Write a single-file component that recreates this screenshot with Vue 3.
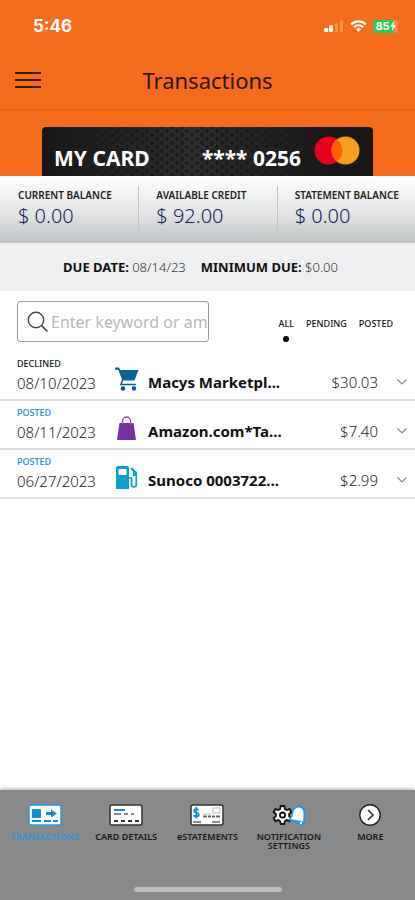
<script setup>
import { ref, computed } from 'vue'

const balances = [
  { label: 'CURRENT BALANCE', value: '$ 0.00' },
  { label: 'AVAILABLE CREDIT', value: '$ 92.00' },
  { label: 'STATEMENT BALANCE', value: '$ 0.00' },
]

const filters = ['ALL', 'PENDING', 'POSTED']
const activeFilter = ref('ALL')
const query = ref('')

const transactions = [
  { status: 'DECLINED', date: '08/10/2023', icon: 'cart', name: 'Macys Marketpl...', amount: '$30.03' },
  { status: 'POSTED', date: '08/11/2023', icon: 'bag', name: 'Amazon.com*Ta...', amount: '$7.40' },
  { status: 'POSTED', date: '06/27/2023', icon: 'fuel', name: 'Sunoco 0003722...', amount: '$2.99' },
]

const visible = computed(() =>
  transactions.filter((t) => {
    const matchesFilter = activeFilter.value === 'ALL' || t.status === activeFilter.value
    const q = query.value.toLowerCase()
    return matchesFilter && (t.name.toLowerCase().includes(q) || t.amount.includes(q))
  }),
)
</script>

<template>
  <div class="screen">
    <header class="top">
      <div class="status-bar">
        <span class="time">5:46</span>
        <div class="indicators">
          <svg class="signal" viewBox="0 0 20 12" aria-hidden="true">
            <rect x="0" y="8" width="4" height="4" rx="1" fill="#fff" />
            <rect x="5" y="5" width="4" height="7" rx="1" fill="#fff" />
            <rect x="11" y="3" width="3" height="9" rx="1" fill="#f98d4c" />
            <rect x="16" y="0" width="3" height="12" rx="1" fill="#f98d4c" />
          </svg>
          <svg class="wifi" viewBox="0 0 17 12" aria-hidden="true">
            <path d="M1.2 4.4a10.4 10.4 0 0 1 14.6 0" fill="none" stroke="#fff" stroke-width="2.2" />
            <path d="M3.9 7.2a6.6 6.6 0 0 1 9.2 0" fill="none" stroke="#fff" stroke-width="2" />
            <path d="M8.5 12 5.9 9.3a3.8 3.8 0 0 1 5.2 0z" fill="#fff" />
          </svg>
          <span class="battery">
            <span>85</span>
            <svg viewBox="0 0 6 10" aria-hidden="true"><path d="M4.2 0 0 5.7h2.4L1.8 10 6 4.2H3.5z" fill="#fff" /></svg>
          </span>
        </div>
      </div>
      <div class="title-bar">
        <button class="menu" type="button" aria-label="Menu"><i></i><i></i><i></i></button>
        <h1>Transactions</h1>
      </div>
      <div class="card-area">
        <div class="card">
          <span class="card-name">MY CARD</span>
          <span class="card-number">**** 0256</span>
          <svg class="brand" viewBox="0 0 46 29" aria-hidden="true">
            <circle cx="14.5" cy="14.5" r="14" fill="#eb001b" />
            <circle cx="31.5" cy="14.5" r="14" fill="#f79e1b" />
            <path d="M23 3.4a14 14 0 0 1 0 22.2a14 14 0 0 1 0-22.2z" fill="#ff5f00" />
          </svg>
        </div>
      </div>
    </header>

    <main>
      <section class="balances">
        <div v-for="b in balances" :key="b.label" class="balance">
          <span class="balance-label">{{ b.label }}</span>
          <span class="balance-value">{{ b.value }}</span>
        </div>
      </section>

      <section class="due">
        <span><b>DUE DATE:</b> 08/14/23</span>
        <span><b>MINIMUM DUE:</b> $0.00</span>
      </section>

      <section class="tools">
        <label class="search">
          <svg viewBox="0 0 22 22" aria-hidden="true">
            <circle cx="9" cy="9" r="7.7" fill="none" stroke="#444" stroke-width="1.4" />
            <path d="M14.5 14.5 20.5 20.5" stroke="#444" stroke-width="1.6" />
          </svg>
          <input v-model="query" type="text" placeholder="Enter keyword or amount" aria-label="Search transactions" />
        </label>
        <div class="filters">
          <button
            v-for="f in filters"
            :key="f"
            type="button"
            :class="{ active: f === activeFilter }"
            @click="activeFilter = f"
          >{{ f }}</button>
        </div>
      </section>

      <ul class="list">
        <li v-for="t in visible" :key="t.name">
          <div class="when">
            <span class="state" :class="t.status.toLowerCase()">{{ t.status }}</span>
            <span class="date">{{ t.date }}</span>
          </div>
          <svg v-if="t.icon === 'cart'" class="kind" viewBox="0 0 24 24" aria-hidden="true">
            <path d="M0 .5h4L5.200 3H23.500l-4 10.500h-12L3.200 2.700H0z" fill="#08649b" />
            <path d="M7.500 13 6 17.500H21" fill="none" stroke="#08649b" stroke-width="1.6" />
            <circle cx="8" cy="21.5" r="2.2" fill="#06539c" />
            <circle cx="19" cy="21.5" r="2.2" fill="#06539c" />
          </svg>
          <svg v-else-if="t.icon === 'bag'" class="kind" viewBox="0 0 24 24" aria-hidden="true">
            <path d="M4.500 7h14L21 24H2z" fill="#7b2fa5" />
            <path d="M7.500 9V5a4 4 0 0 1 8 0v4" fill="none" stroke="#8d55ad" stroke-width="1.4" />
          </svg>
          <svg v-else class="kind" viewBox="0 0 24 24" aria-hidden="true">
            <path d="M1 3a2 2 0 0 1 2-2h9a2 2 0 0 1 2 2v21H1z" fill="#0a9fd0" />
            <rect x="3.5" y="4" width="8" height="6" rx="1" fill="#fff" />
            <path d="M14 13h2.500v6.500a2.400 2.400 0 0 0 4.800 0V9.500L16 3" fill="none" stroke="#0a9fd0" stroke-width="1.7" />
            <path d="M17 2.500 22 7v4h-4V7z" fill="#0a9fd0" />
          </svg>
          <span class="name">{{ t.name }}</span>
          <span class="amount">{{ t.amount }}</span>
          <button class="expand" type="button" :aria-label="'Show ' + t.name">
            <svg viewBox="0 0 12 8" aria-hidden="true"><path d="M1.5 1.5 6 6l4.500-4.500" fill="none" stroke="#888" stroke-width="1.2" /></svg>
          </button>
        </li>
      </ul>
    </main>

    <footer>
      <nav>
        <a href="#transactions" class="current">
          <svg class="wide" viewBox="0 0 34 22" aria-hidden="true">
            <rect x="1" y="1" width="32" height="20" rx="2" fill="#fff" stroke="#279be8" stroke-width="1.5" />
            <rect x="4" y="5" width="9" height="9" rx="1" fill="#168bd5" />
            <path d="M18 8h5V5.500l6 4-6 4V11h-5z" fill="#168bd5" />
            <path d="M4 17h9M16 17h7M25 17h5" stroke="#168bd5" stroke-width="2" />
          </svg>
          <span>TRANSACTIONS</span>
        </a>
        <a href="#card">
          <svg class="wide" viewBox="0 0 34 22" aria-hidden="true">
            <rect x="1" y="1" width="32" height="20" rx="2" fill="#fff" stroke="#333" stroke-width="1.5" />
            <path d="M5 6h11" stroke="#168bd5" stroke-width="2" />
            <path d="M5 10h7M15 10h4M22 10h3" stroke="#888" stroke-width="2" />
            <path d="M5 17h4M12 17h4M19 17h4M26 17h4" stroke="#333" stroke-width="2" />
          </svg>
          <span>CARD DETAILS</span>
        </a>
        <a href="#statements">
          <svg class="wide" viewBox="0 0 34 22" aria-hidden="true">
            <rect x="1" y="1" width="32" height="20" rx="2" fill="#fff" stroke="#333" stroke-width="1.5" />
            <path d="M8.500 6c-1-1.300-4.500-1.200-4.500.8 0 2.200 4.800 1.500 4.800 3.900 0 2.200-4 2.300-5.300.6M6.300 3v11.500" fill="none" stroke="#168bd5" stroke-width="1.8" />
            <path d="M13 12.500h4M18 12.500h3M22 12.500h3M26 12.500h4" stroke="#666" stroke-width="2" />
            <path d="M13 10h8" stroke="#bbb" stroke-width="1" />
            <rect x="23" y="4" width="7" height="5" fill="#fff" stroke="#bbb" />
            <path d="M3 18h8M22 18h8" stroke="#666" stroke-width="1.5" />
          </svg>
          <span>eSTATEMENTS</span>
        </a>
        <a href="#notifications">
          <svg class="wide" viewBox="0 0 34 22" aria-hidden="true">
            <path d="M8.700 2h3.600l.5 2.900 2 1.200 2.800-1 1.700 3-2.200 1.900v2.200l2.200 1.900-1.700 3-2.800-1-2 1.200-.5 2.700H8.700l-.5-2.700-2-1.200-2.800 1-1.700-3 2.200-1.900V10L1.700 8.100l1.700-3 2.800 1 2-1.200z" fill="#fff" stroke="#111" stroke-width="1.8" />
            <circle cx="10.5" cy="11.100" r="2.6" fill="#fff" stroke="#111" stroke-width="1.8" />
            <path d="M26 1.500 28.500.8l.8 1.700c3 1.300 4.200 4 4 7.500l.2 7-1.500 1.500.3 3-3.800-.2-1.500-1.300L17 16.500l.5-3 2-2 .5-4c.8-3.500 3-5.300 6-6z" fill="#2097ed" />
            <path d="M27 3.500c3.500.5 4.700 3 4.500 6.500L31.200 17.500 18.500 15l2-2.500 1-4.500c.6-2.800 2.500-4.500 5.500-4.500z" fill="#fff" />
            <circle cx="29" cy="19" r="1.2" fill="#fff" />
          </svg>
          <span>NOTIFICATION SETTINGS</span>
        </a>
        <a href="#more">
          <svg class="wide" viewBox="0 0 34 22" aria-hidden="true">
            <circle cx="17" cy="11" r="10.2" fill="#fff" stroke="#222" stroke-width="1.4" />
            <path d="M15 6l5 5-5 5" fill="none" stroke="#333" stroke-width="1.7" />
          </svg>
          <span>MORE</span>
        </a>
      </nav>
      <div class="home-indicator"></div>
    </footer>
  </div>
</template>

<style>
body {
  margin: 0;
  background: #fff;
}
</style>

<style scoped>
* {
  box-sizing: border-box;
}
.screen {
  display: flex;
  flex-direction: column;
  min-height: 100vh;
  font-family: "Noto Sans", "Open Sans", sans-serif;
  color: #111;
}
button {
  padding: 0;
  border: 0;
  background: none;
  font: inherit;
  color: inherit;
}
.top {
  background: #f56c1d;
}
.status-bar {
  display: flex;
  justify-content: space-between;
  align-items: center;
  height: 52px;
  padding: 0 17px 0 33px;
  color: #fff;
}
.time {
  font: 700 17px/20px Inter, sans-serif;
}
.indicators {
  display: flex;
  align-items: center;
  gap: 6px;
}
.signal {
  width: 20px;
  height: 12px;
}
.wifi {
  width: 17px;
  height: 12px;
}
.battery {
  display: flex;
  align-items: center;
  justify-content: center;
  width: 25px;
  height: 13px;
  border-radius: 4px;
  background: linear-gradient(90deg, #23ce5c 84%, #f98d4c 84%);
  font: 700 11px/13px Inter, sans-serif;
}
.battery svg {
  width: 6px;
  height: 10px;
}
.title-bar {
  display: grid;
  grid-template-columns: 48px 1fr 48px;
  align-items: center;
  height: 58px;
  padding-bottom: 2px;
  border-bottom: 1px solid #df621b;
}
.menu {
  display: grid;
  gap: 5px;
  width: 26px;
  margin-left: 15px;
}
.menu i {
  height: 2px;
  background: #3a1a08;
}
h1 {
  margin: 0;
  text-align: center;
  font-size: 22px;
  line-height: 28px;
  font-weight: 400;
  color: #28150a;
}
.card-area {
  padding: 17px 42px 0;
}
.card {
  display: flex;
  align-items: center;
  height: 49px;
  padding: 0 13px 0 12px;
  border-radius: 4px 4px 0 0;
  background:
    radial-gradient(circle, #1a1a1a 1px, transparent 3px) 0 0 / 10px 8px,
    radial-gradient(circle, #1a1a1a 1px, transparent 3px) 5px 4px / 10px 8px,
    linear-gradient(90deg, #161616, #303030 45%, #161616 90%);
  color: #fff;
  font-size: 21px;
  line-height: 28px;
  font-weight: 700;
}
.card-name,
.card-number {
  padding-top: 12px;
}
.card-number {
  margin-left: auto;
}
.brand {
  width: 46px;
  height: 29px;
  margin: 0 0 2px 13px;
}
.balances {
  display: grid;
  grid-template-columns: repeat(3, 1fr);
  height: 67px;
  padding: 10px 0 12px;
  background: linear-gradient(#fff, #e3e5e6 55%, #bfc2c4);
}
.balance {
  display: flex;
  flex-direction: column;
  padding-left: 18px;
  white-space: nowrap;
}
.balance + .balance {
  padding-left: 17px;
  border-left: 1px solid #c2c4c6;
}
.balance-label {
  padding-top: 2px;
  font-size: 10px;
  line-height: 14px;
  font-weight: 600;
  color: #222;
}
.balance-value {
  font-size: 20px;
  line-height: 28px;
  font-weight: 300;
  color: #14225f;
}
.due {
  display: flex;
  justify-content: center;
  align-items: center;
  gap: 15px;
  height: 48px;
  padding-right: 14px;
  background: #eeeff1;
  font-size: 13px;
  line-height: 20px;
  font-weight: 300;
  color: #333;
}
.due b {
  font-weight: 700;
  color: #111;
}
.tools {
  display: flex;
  justify-content: space-between;
  align-items: flex-start;
  padding: 10px 22px 10px 17px;
}
.search {
  display: flex;
  align-items: center;
  width: 51%;
  height: 41px;
  padding-left: 9px;
  border: 1px solid #999;
  border-radius: 3px;
}
.search svg {
  flex: none;
  width: 22px;
  height: 22px;
}
.search input {
  flex: 1;
  min-width: 0;
  padding: 0 0 0 2px;
  border: 0;
  outline: 0;
  background: none;
  font: inherit;
  font-size: 16px;
  line-height: 24px;
}
.search input::placeholder {
  color: #b8b8b8;
  opacity: 1;
}
.filters {
  display: flex;
  gap: 12px;
  padding-top: 16px;
}
.filters button {
  display: flex;
  flex-direction: column;
  align-items: center;
  font-size: 9px;
  line-height: 14px;
  font-weight: 500;
}
.filters .active::after {
  content: "";
  width: 6px;
  height: 6px;
  margin-top: 5px;
  border-radius: 50%;
  background: #000;
}
.list {
  margin: 0;
  padding: 0;
  list-style: none;
}
.list li {
  display: grid;
  grid-template-columns: 98px 24px 1fr auto 12px;
  height: 49px;
  padding: 6px 7px 0 17px;
  border-bottom: 2px solid #dedede;
}
.when {
  display: flex;
  flex-direction: column;
}
.state {
  font-size: 9px;
  line-height: 12px;
  font-weight: 500;
}
.state.posted {
  color: #1688dd;
}
.date {
  font-size: 15px;
  line-height: 26px;
  font-weight: 300;
  color: #222;
}
.kind {
  width: 24px;
  height: 24px;
  margin-top: 9px;
}
.name {
  padding: 12px 0 0 9px;
  font-size: 15px;
  line-height: 24px;
  font-weight: 700;
}
.amount {
  padding: 12px 18px 0 0;
  font-size: 15px;
  line-height: 24px;
  font-weight: 300;
  color: #222;
}
.expand {
  align-self: start;
  padding-top: 12px;
}
.expand svg {
  display: block;
  width: 12px;
  height: 8px;
  margin-top: 8px;
}
footer {
  display: flex;
  flex-direction: column;
  justify-content: space-between;
  align-items: center;
  height: 110px;
  margin-top: auto;
  padding: 14px 4px 8px;
  background: #87898a;
  box-shadow: 0 -1px 4px #aaa;
}
nav {
  display: grid;
  grid-template-columns: repeat(5, 1fr);
  width: 100%;
}
nav a {
  display: flex;
  flex-direction: column;
  align-items: center;
  gap: 6px;
  color: #181818;
  text-align: center;
  text-decoration: none;
  font-size: 9px;
  line-height: 9px;
  font-weight: 600;
}
nav .current {
  color: #2499ea;
}
.wide {
  width: 34px;
  height: 22px;
}
.home-indicator {
  width: 148px;
  height: 5px;
  border-radius: 3px;
  background: #bcbebd;
}
</style>
